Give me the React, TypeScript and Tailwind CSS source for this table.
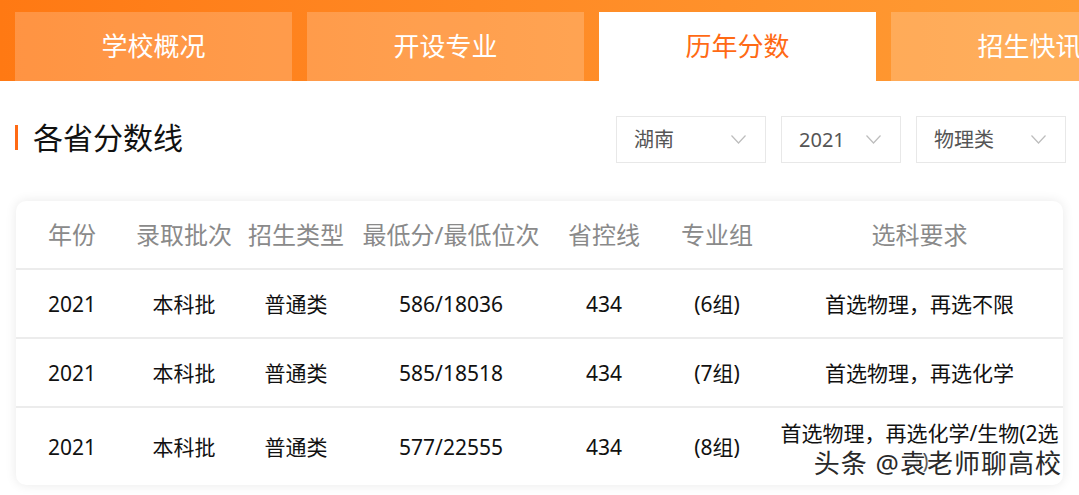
import React from 'react';

const TABS = ['学校概况', '开设专业', '历年分数', '招生快讯'];
const ACTIVE = 2;

const FILTERS = [
    { label: '湖南', width: 'w-[150px]' },
    { label: '2021', width: 'w-[120px]' },
    { label: '物理类', width: 'w-[150px]' },
];

const HEADERS = ['年份', '录取批次', '招生类型', '最低分/最低位次', '省控线', '专业组', '选科要求'];

const ROWS = [
    ['2021', '本科批', '普通类', '586/18036', '434', '(6组)', '首选物理，再选不限'],
    ['2021', '本科批', '普通类', '585/18518', '434', '(7组)', '首选物理，再选化学'],
    ['2021', '本科批', '普通类', '577/22555', '434', '(8组)', '首选物理，再选化学/生物(2选1)'],
];

const GRID = 'grid grid-cols-[112px_112px_112px_198px_108px_118px_1fr]';

const Chevron = () => (
    <svg width="15" height="9" viewBox="0 0 15 9" fill="none">
        <polyline points="0.5,0.5 7.5,8 14.5,0.5" stroke="#bdbdbd" strokeWidth="1.2" />
    </svg>
);

const App = () => {
    return (
        <div
            className="w-[1079px] h-[495px] overflow-hidden bg-white"
            style={{ fontFamily: '"Noto Sans", "Noto Sans CJK SC", sans-serif' }}
        >
            {/* Tab strip */}
            <div className="h-[81px] pt-3 pl-[15px] flex gap-[15px] overflow-hidden bg-gradient-to-r from-[#ff7913] to-[#ff9c34]">
                {TABS.map((tab, i) => (
                    <div
                        key={tab}
                        className={`w-[277px] shrink-0 h-[69px] flex items-center justify-center text-[26px] ${
                            i === ACTIVE ? 'bg-white text-[#ff6a14]' : 'bg-white/20 text-white'
                        }`}
                    >
                        {tab}
                    </div>
                ))}
            </div>

            {/* Section title + filters */}
            <div className="flex items-center justify-between pt-[35px] pl-[15px] pr-[13px]">
                <div className="flex items-center gap-[15px] -mt-1">
                    <span className="w-[3px] h-[25px] bg-[#ff6a14]"></span>
                    <span className="text-[30px] text-[#111] leading-none">各省分数线</span>
                </div>
                <div className="flex gap-[15px]">
                    {FILTERS.map((f) => (
                        <div
                            key={f.label}
                            className={`${f.width} h-[47px] border border-[#e8e8e8] flex items-center justify-between pl-[17px] pr-[19px] text-[20px] text-[#555]`}
                        >
                            <span>{f.label}</span>
                            <Chevron />
                        </div>
                    ))}
                </div>
            </div>

            {/* Score table */}
            <div className="relative mt-[38px] ml-4 w-[1047px] rounded-[10px] bg-white shadow-[0_0_12px_rgba(0,0,0,0.09)] overflow-hidden">
                <div className={`${GRID} h-[69px] border-b-2 border-[#ececec] text-[24px] text-[#8a8a8a] items-center`}>
                    {HEADERS.map((h) => (
                        <div key={h} className="text-center whitespace-nowrap">
                            {h}
                        </div>
                    ))}
                </div>
                {ROWS.map((row, r) => (
                    <div
                        key={r}
                        className={`${GRID} items-center text-[21px] text-[#111] ${
                            r < ROWS.length - 1 ? 'h-[69px] border-b-2 border-[#ececec]' : 'h-[77px]'
                        }`}
                    >
                        {row.map((cell, c) => (
                            <div key={c} className="text-center leading-7">
                                {cell}
                            </div>
                        ))}
                    </div>
                ))}

                {/* Watermark */}
                <div
                    className="absolute right-[1px] bottom-[2px] text-[26px] text-[#2a2a2a] tracking-[1px]"
                    style={{ textShadow: '0 0 3px #fff, 0 0 3px #fff, 0 0 6px #fff, 0 0 8px #fff' }}
                >
                    头条 @袁老师聊高校
                </div>
            </div>
        </div>
    );
};

export default App;
